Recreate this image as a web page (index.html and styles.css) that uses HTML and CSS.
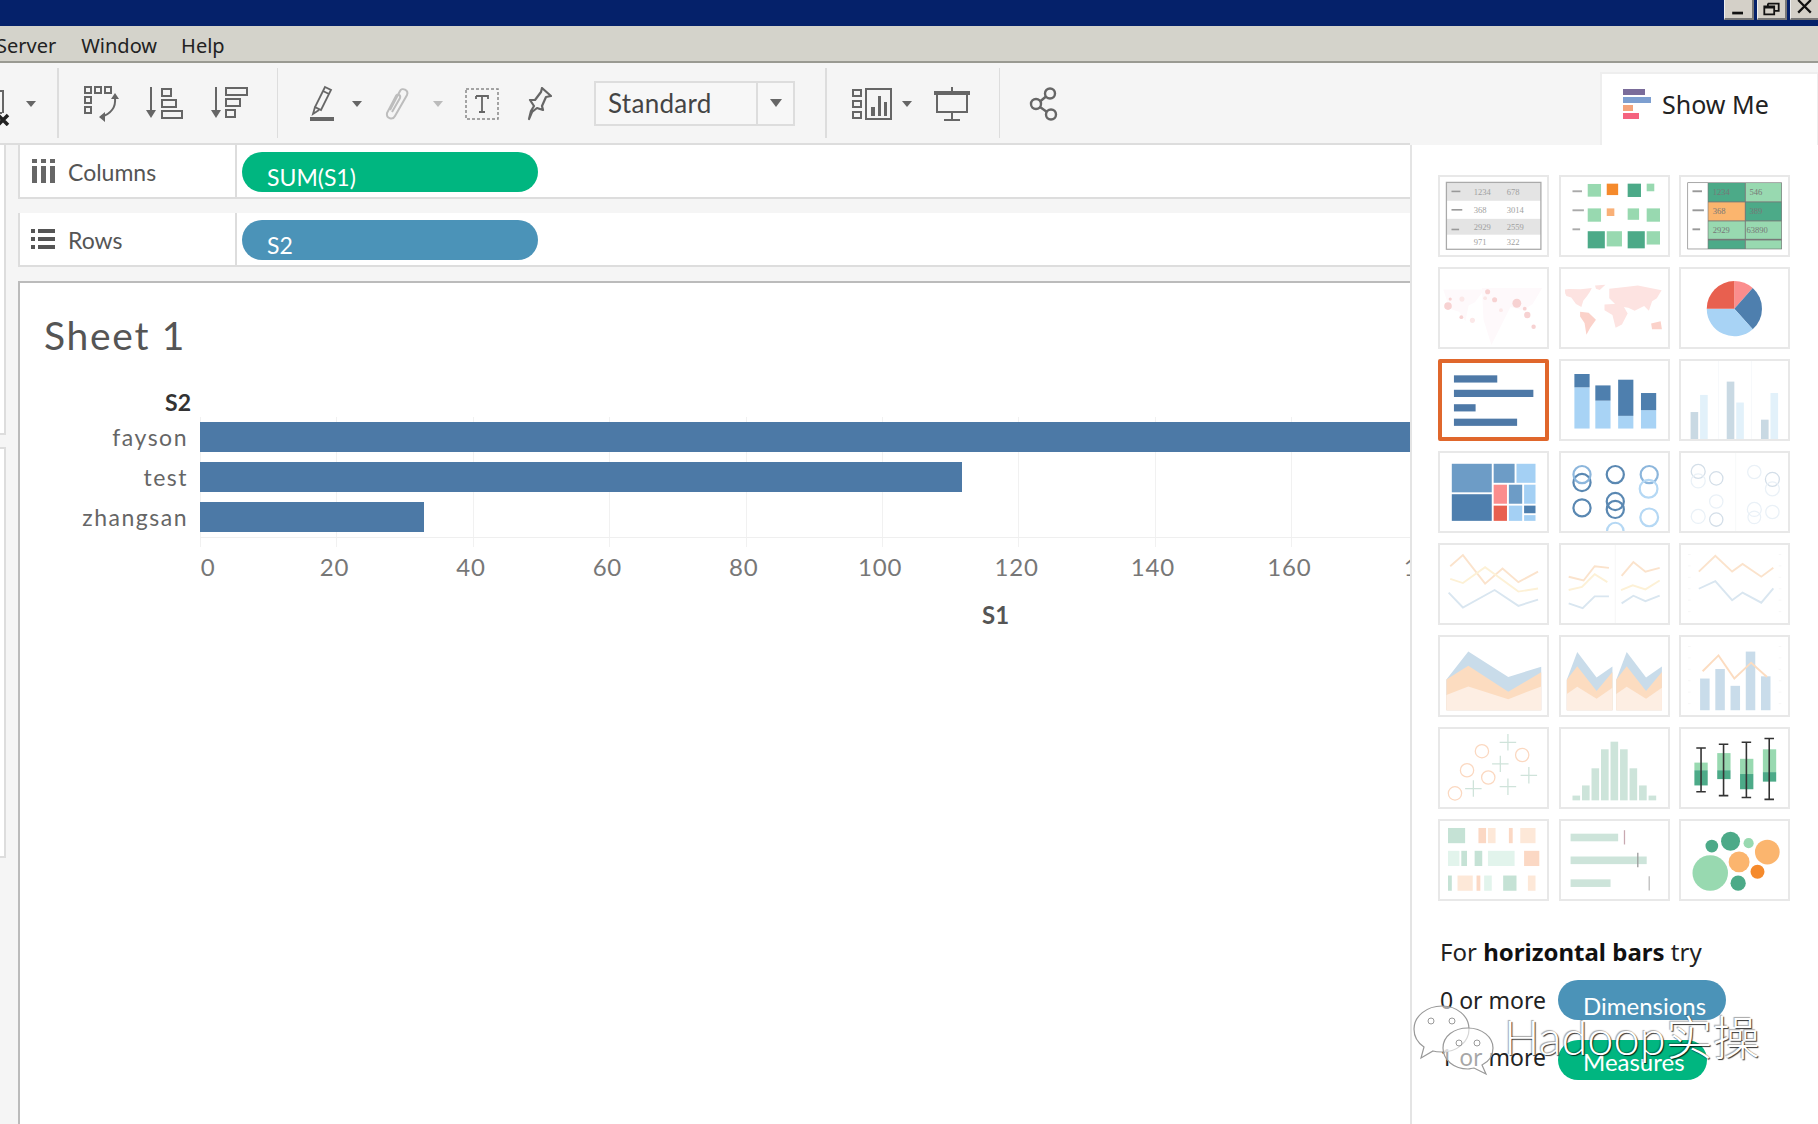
FILE: index.html
```html
<!DOCTYPE html>
<html lang="en">
<head>
<meta charset="utf-8">
<title>Tableau - Sheet 1</title>
<link rel="stylesheet" href="styles.css">
</head>
<body>
<div class="app">
  <header class="titlebar">
    <div class="winbtn"><svg class="wg" viewBox="0 0 30 20"><rect x="8" y="13" width="12" height="3" fill="#111"/></svg></div>
    <div class="winbtn"><svg class="wg" viewBox="0 0 30 20"><path d="M11 4h12v8h-4M11 4v3M7 7h11v9H7zM7 8.500h11" fill="none" stroke="#111" stroke-width="2"/></svg></div>
    <div class="winbtn close"><svg class="wg" viewBox="0 0 28 20"><path d="M7 0l14 14M21 0L7 14" stroke="#111" stroke-width="2.500"/></svg></div>
  </header>
  <nav class="menubar"><span class="m-server">Server</span><span>Window</span><span>Help</span></nav>

  <div class="workspace">
    <div class="leftcol">
      <div class="toolbar">
        <svg class="ti i-clear" viewBox="0 0 10 36"><path d="M-4 1h7v22M-4 23h6" fill="none" stroke="#666" stroke-width="2"/><path d="M-2 25l10 10M8 25L-2 35" stroke="#222" stroke-width="3.500"/></svg>
        <i class="caret c-clear"></i>
        <b class="sep s1"></b>
        <svg class="ti i-swap" viewBox="0 0 36 36"><g fill="none" stroke="#666" stroke-width="2"><rect x="1" y="1" width="6" height="6"/><rect x="11" y="1" width="6" height="6"/><rect x="21" y="1" width="6" height="6"/><rect x="1" y="11" width="6" height="6"/><rect x="1" y="21" width="6" height="6"/><path d="M31 12c1 9-4 16-14 19"/></g><path d="M27 13l4-6 4 6zM21 26l-6 5 6 5z" fill="#666"/></svg>
        <svg class="ti i-asc" viewBox="0 0 38 36"><path d="M5 1v26" stroke="#666" stroke-width="2"/><path d="M0 24h10l-5 8z" fill="#666"/><g fill="none" stroke="#666" stroke-width="2"><rect x="16" y="3" width="9" height="7"/><rect x="16" y="14" width="14" height="7"/><rect x="16" y="25" width="20" height="7"/></g></svg>
        <svg class="ti i-desc" viewBox="0 0 38 36"><path d="M5 1v26" stroke="#666" stroke-width="2"/><path d="M0 24h10l-5 8z" fill="#666"/><g fill="none" stroke="#666" stroke-width="2"><rect x="15" y="2" width="21" height="7"/><rect x="15" y="13" width="14" height="7"/><rect x="15" y="24" width="9" height="7"/></g></svg>
        <b class="sep s2"></b>
        <svg class="ti i-pen" viewBox="0 0 26 38"><path d="M15 2l6 3-10 20-6-3zM5 22l-2 7 6-4M13 6l6 3" fill="none" stroke="#666" stroke-width="1.800"/><rect x="0" y="32" width="24" height="4" fill="#666"/></svg>
        <i class="caret c-pen"></i>
        <svg class="ti i-clip" viewBox="0 0 26 36"><path d="M6 24L16 5c2-4 9-1 7 4L11 30c-2 4-9 3-8-3L12 10c1-3 5-1 4 2L8 26" fill="none" stroke="#bdbdbd" stroke-width="2"/></svg>
        <i class="caret c-clip"></i>
        <svg class="ti i-text" viewBox="0 0 34 32"><rect x="1" y="1" width="32" height="30" fill="none" stroke="#888" stroke-width="1.500" stroke-dasharray="3 2"/><path d="M11 8h12v3M11 8v3M17 8v16M14 24h6" fill="none" stroke="#666" stroke-width="1.800"/></svg>
        <svg class="ti i-pin" viewBox="0 0 26 34"><path d="M16 1l9 8-5 1-4 9 1 4-6-2-5 4-3 7 2-8 3-5-4-6 5 0 6-8z" fill="none" stroke="#666" stroke-width="2.200" stroke-linejoin="round"/></svg>
        <div class="select"><span class="select-text">Standard</span><span class="select-arrow"><i class="caret big"></i></span></div>
        <b class="sep s3"></b>
        <svg class="ti i-showme" viewBox="0 0 40 32"><g fill="none" stroke="#666" stroke-width="2"><rect x="1" y="2" width="8" height="6"/><rect x="1" y="13" width="8" height="6"/><rect x="1" y="24" width="8" height="6"/><rect x="14" y="1" width="25" height="30"/></g><path d="M19 19h4v9h-4zM26 8h3v20h-3zM32 14h3v14h-3z" fill="#666"/></svg>
        <i class="caret c-showme"></i>
        <svg class="ti i-present" viewBox="0 0 36 34"><path d="M0 4h36v4H0zM17 0h2v4h-2z" fill="#666"/><path d="M3 8v17h30V8M18 25v8M10 33h16" fill="none" stroke="#666" stroke-width="2"/></svg>
        <b class="sep s4"></b>
        <svg class="ti i-share" viewBox="0 0 30 34"><g fill="none" stroke="#666" stroke-width="2.400"><circle cx="21" cy="6.500" r="5"/><circle cx="7" cy="17" r="5"/><circle cx="22" cy="27.500" r="5"/><path d="M17 9.500l-6 5M11 20l7 5"/></g></svg>
      </div>

      <div class="below">
        <aside class="side"><div class="side-a"></div><div class="side-b"></div></aside>
        <main class="center">
          <div class="shelf">
            <div class="shelf-label">
              <svg class="shelf-ic" viewBox="0 0 24 24"><path d="M1 0h5v4H1zM10 0h5v4h-5zM19 0h5v4h-5zM1 7h5v17H1zM10 7h5v17h-5zM19 7h5v17h-5z" fill="#666"/></svg>
              <span>Columns</span>
            </div>
            <div class="shelf-body"><div class="pill green">SUM(S1)</div></div>
          </div>
          <div class="shelf">
            <div class="shelf-label">
              <svg class="shelf-ic" viewBox="0 0 24 24"><path d="M0 2h4v4H0zM7 2h17v4H7zM0 10h4v4H0zM7 10h17v4H7zM0 18h4v4H0zM7 18h17v4H7z" fill="#555"/></svg>
              <span>Rows</span>
            </div>
            <div class="shelf-body"><div class="pill blue">S2</div></div>
          </div>
          <section class="viz">
            <h1 class="sheet-title">Sheet 1</h1>
            <div class="dim-head">S2</div>
            <div class="chart-body">
              <div class="row-labels"><div>fayson</div><div>test</div><div>zhangsan</div></div>
              <div class="plot">
                <div class="bar" style="width:1211px"></div>
                <div class="bar" style="width:762px"></div>
                <div class="bar" style="width:224px"></div>
              </div>
            </div>
            <div class="axis">
              <span class="first">0</span><span>20</span><span>40</span><span>60</span><span>80</span><span>100</span><span>120</span><span>140</span><span>160</span><span>180</span>
            </div>
            <div class="axis-title">S1</div>
          </section>
        </main>
      </div>
    </div>

    <div class="rightcol">
      <div class="rtop">
        <div class="tab">
          <svg class="tab-ic" viewBox="0 0 28 30"><rect width="22" height="6" fill="#7a6c9a"/><rect y="8" width="28" height="6" fill="#7d9fd0"/><rect y="16" width="10" height="6" fill="#f4a47c"/><rect y="24" width="16" height="6" fill="#f5637f"/></svg>
          <span>Show Me</span>
        </div>
      </div>
      <div class="showme">
        <div class="thumbs">
          <svg class="th" viewBox="0 0 333 246"><rect x="18" y="17" width="298" height="58" fill="#e4e4e4"/><rect x="18" y="132" width="298" height="50" fill="#e4e4e4"/><rect x="18" y="17" width="298" height="211" fill="none" stroke="#aaa" stroke-width="4"/><g fill="#999"><rect x="34" y="43" width="28" height="5"/><rect x="34" y="101" width="34" height="5"/><rect x="34" y="163" width="24" height="5"/></g><g class="tnum"><text x="104" y="58">1234</text><text x="208" y="58">678</text><text x="104" y="113">368</text><text x="208" y="113">3014</text><text x="104" y="167">2929</text><text x="208" y="167">2559</text><text x="104" y="214">971</text><text x="208" y="214">322</text></g></svg>
          <svg class="th" viewBox="0 0 333 246"><g fill="#aaa"><rect x="34" y="42" width="30" height="6"/><rect x="34" y="102" width="36" height="6"/><rect x="34" y="162" width="24" height="6"/></g><g fill="#98d9b0"><rect x="82" y="22" width="42" height="40"/><rect x="268" y="21" width="24" height="24"/><rect x="82" y="99" width="42" height="42"/><rect x="208" y="99" width="36" height="36"/><rect x="268" y="99" width="42" height="42"/><rect x="142" y="171" width="48" height="48"/><rect x="268" y="171" width="42" height="42"/></g><rect x="142" y="21" width="36" height="36" fill="#f58a2c"/><rect x="142" y="99" width="24" height="24" fill="#f9b077"/><g fill="#4caa88"><rect x="208" y="21" width="42" height="42"/><rect x="82" y="171" width="54" height="54"/><rect x="208" y="171" width="54" height="54"/></g></svg>
          <svg class="th" viewBox="0 0 333 246"><rect x="18" y="17" width="298" height="211" fill="#777"/><rect x="20" y="19" width="62" height="207" fill="#fff"/><g fill="#999"><rect x="34" y="42" width="30" height="6"/><rect x="34" y="102" width="36" height="6"/><rect x="34" y="162" width="24" height="6"/></g><rect x="84" y="19" width="115" height="58" fill="#4caa88"/><rect x="202" y="19" width="112" height="58" fill="#98d9b0"/><rect x="84" y="80" width="115" height="57" fill="#fbb56e"/><rect x="202" y="80" width="112" height="57" fill="#4caa88"/><rect x="84" y="140" width="115" height="55" fill="#98d9b0"/><rect x="202" y="140" width="112" height="55" fill="#98d9b0"/><rect x="84" y="200" width="115" height="26" fill="#4caa88"/><rect x="202" y="200" width="112" height="26" fill="#98d9b0"/><g class="tnum dark"><text x="98" y="56">1234</text><text x="214" y="56">546</text><text x="98" y="118">368</text><text x="214" y="118">389</text><text x="98" y="178">2929</text><text x="204" y="178">63890</text></g></svg>

          <svg class="th" viewBox="0 0 333 246"><path d="M8 65h130l-30 40-20 10-10 50-20-30-30-10zM130 60h190l-30 50-30 20-40-10-30 60-30 60-25-80z" fill="#fef9fb"/><g fill="#f7d2d2"><circle cx="23" cy="117" r="12"/><circle cx="148" cy="72" r="8"/><circle cx="170" cy="97" r="8"/><circle cx="240" cy="108" r="14"/><circle cx="265" cy="125" r="6"/><circle cx="273" cy="145" r="10"/><circle cx="293" cy="182" r="7"/><circle cx="65" cy="152" r="6"/><circle cx="30" cy="95" r="5"/></g><g fill="#fbe8e8"><circle cx="67" cy="95" r="8"/><circle cx="100" cy="162" r="8"/><circle cx="190" cy="130" r="6"/><circle cx="140" cy="92" r="6"/></g></svg>
          <svg class="th" viewBox="0 0 333 246"><g fill="#fde3e1"><path d="M10 65l12-2 38 1 35-4-6 12-9 13-12 15-6 20-17-10-15-20-15-5-4-8z"/><path d="M105 52l33-2-18 16-12-4z"/><path d="M150 62l50-5 40-5 75 15-15 25-15 10-10 30-15-15-30 15-20-10-35-5-25-25z"/><path d="M135 112l55-3 18 31-18 35-20 10-10-40-25-15z"/></g><g fill="#fbd2ca"><path d="M58 135l27 3 23 22-18 25-12 22-6-37-14-20z"/><path d="M282 172l30-7 4 25-31 0z"/></g></svg>
          <svg class="th" viewBox="0 0 333 246"><path d="M166 125V38a87 87 0 0 1 58 22z" fill="#fb8d8d"/><path d="M166 125l58-65a87 87 0 0 1 0 130z" fill="#4e7fae"/><path d="M166 125l58 65A87 87 0 0 1 79 125z" fill="#a8d3f5"/><path d="M166 125H79a87 87 0 0 1 87-87z" fill="#e8604f"/></svg>

          <svg class="th sel" viewBox="0 0 333 246"><g fill="#4e79a7"><rect x="35" y="41" width="144" height="24"/><rect x="35" y="89" width="264" height="24"/><rect x="35" y="137" width="72" height="24"/><rect x="35" y="185" width="210" height="24"/></g></svg>
          <svg class="th" viewBox="0 0 333 246"><g fill="#a8d3f5"><rect x="40" y="83" width="48" height="130"/><rect x="106" y="125" width="48" height="88"/><rect x="178" y="173" width="48" height="40"/><rect x="250" y="155" width="48" height="58"/></g><g fill="#4e7fae"><rect x="40" y="41" width="48" height="42"/><rect x="106" y="77" width="48" height="48"/><rect x="178" y="59" width="48" height="114"/><rect x="250" y="101" width="48" height="54"/></g></svg>
          <svg class="th" viewBox="0 0 333 246"><path d="M116 0v246M220 0v246" stroke="#f2f6f8" stroke-width="2"/><g fill="#c9d9e3"><rect x="28" y="161" width="24" height="85"/><rect x="142" y="65" width="24" height="181"/><rect x="250" y="185" width="24" height="61"/></g><g fill="#e2f1fa"><rect x="58" y="107" width="24" height="139"/><rect x="172" y="131" width="24" height="115"/><rect x="280" y="101" width="24" height="145"/></g></svg>

          <svg class="th" viewBox="0 0 333 246"><rect x="35" y="34" width="126" height="90" fill="#6d9cc6"/><rect x="35" y="130" width="126" height="84" fill="#4e7fae"/><rect x="167" y="34" width="66" height="60" fill="#6d9cc6"/><rect x="239" y="34" width="60" height="60" fill="#a4d0f4"/><rect x="167" y="100" width="42" height="60" fill="#fb8d8d"/><rect x="215" y="100" width="42" height="60" fill="#6d9cc6"/><rect x="263" y="100" width="36" height="60" fill="#a4d0f4"/><rect x="167" y="166" width="42" height="48" fill="#e8604f"/><rect x="215" y="166" width="42" height="48" fill="#a4d0f4"/><rect x="263" y="166" width="36" height="24" fill="#4e7fae"/><rect x="263" y="196" width="36" height="18" fill="#a4d0f4"/></svg>
          <svg class="th" viewBox="0 0 333 246"><g fill="none" stroke-width="7"><g stroke="#5a88b2"><circle cx="64" cy="93" r="27"/><circle cx="169" cy="68" r="27"/><circle cx="64" cy="173" r="27"/><circle cx="169" cy="153" r="27"/><circle cx="169" cy="178" r="27"/></g><g stroke="#8cb6dc"><circle cx="64" cy="68" r="27"/><circle cx="276" cy="68" r="27"/></g><g stroke="#b5d8f4"><circle cx="274" cy="113" r="28"/><circle cx="276" cy="203" r="28"/><circle cx="169" cy="246" r="26"/></g></g></svg>
          <svg class="th" viewBox="0 0 333 246"><path d="M170 0v246" stroke="#f3f5f7" stroke-width="2"/><g fill="none" stroke-width="4"><g stroke="#d3dee8"><circle cx="52" cy="58" r="22"/><circle cx="109" cy="80" r="21"/><circle cx="109" cy="210" r="21"/><circle cx="286" cy="83" r="22"/></g><g stroke="#eaf1f7"><circle cx="52" cy="88" r="22"/><circle cx="109" cy="153" r="21"/><circle cx="52" cy="200" r="22"/><circle cx="229" cy="60" r="21"/><circle cx="286" cy="113" r="22"/><circle cx="229" cy="178" r="22"/><circle cx="229" cy="203" r="20"/><circle cx="286" cy="186" r="21"/></g></g></svg>

          <svg class="th" viewBox="0 0 333 246"><g fill="none" stroke-width="6"><path d="M30 67l40-35 70 90 55-48 50 43 62-33" stroke="#fbe3cc"/><path d="M30 107l40 13 70-50 105 77 62-10" stroke="#fdf1d6"/><path d="M25 150l45 47 100-55 75 50 62-20" stroke="#d9e6f0"/></g></svg>
          <svg class="th" viewBox="0 0 333 246"><path d="M169 0v246" stroke="#f0f0f0" stroke-width="2"/><g fill="none" stroke-width="6"><g stroke="#fbe3cc"><path d="M22 100l47 12 35-45 45 5"/><path d="M189 97l37-43 38 30 45-12"/></g><g stroke="#fdf1d6"><path d="M22 142l42-10 40-40 40 25"/><path d="M187 142l37-15 40 13 45-28"/></g><g stroke="#d9e6f0"><path d="M22 184l44 15 38-37h45"/><path d="M189 184l37-24 38 17 45-17"/></g></g></svg>
          <svg class="th" viewBox="0 0 333 246"><path d="M20 30h8M20 66h8M20 102h8M20 138h8M20 174h8M20 210h8M306 30h8M306 66h8M306 102h8M306 138h8M306 174h8M306 210h8" stroke="#f2f2f2" stroke-width="2"/><g fill="none" stroke-width="6"><path d="M54 84l52-50 53 50 33-24 59 40 38-28" stroke="#fbe3cc"/><path d="M54 138l52-24 53 60 33-24 59 32 38-45" stroke="#d9e6f0"/></g></svg>

          <svg class="th" viewBox="0 0 333 246"><path d="M18 134l69-88 126 80 104-32v137H18z" fill="#c9dcea"/><path d="M18 134l69-43 126 82 104-62v120H18z" fill="#fcdcc0"/><path d="M18 183l69-27 126 40 104-40v75H18z" fill="#fdeee3"/></svg>
          <svg class="th" viewBox="0 0 333 246"><path d="M16 135l33-88 61 81 50-35v138H16z" fill="#c9dcea"/><path d="M16 135l33-43 61 78 50-60v121H16z" fill="#fcdcc0"/><path d="M16 180l33-23 61 38 50-35v71H16z" fill="#fdeee3"/><path d="M172 135l33-88 61 81 50-35v138H172z" fill="#c9dcea"/><path d="M172 135l33-43 61 78 50-60v121H172z" fill="#fcdcc0"/><path d="M172 180l33-23 61 38 50-35v71H172z" fill="#fdeee3"/></svg>
          <svg class="th" viewBox="0 0 333 246"><path d="M20 30h8M20 66h8M20 102h8M20 138h8M20 174h8M20 210h8M306 30h8M306 66h8M306 102h8M306 138h8M306 174h8M306 210h8" stroke="#f2f2f2" stroke-width="2"/><g fill="#c9dcea"><rect x="58" y="131" width="30" height="100"/><rect x="106" y="101" width="30" height="130"/><rect x="154" y="154" width="30" height="77"/><rect x="202" y="46" width="30" height="185"/><rect x="250" y="124" width="30" height="107"/></g><path d="M66 108l50-50 50 73 53-50 50 45" fill="none" stroke="#fcdcc0" stroke-width="6"/></svg>

          <svg class="th" viewBox="0 0 333 246"><g fill="none" stroke="#fbd8c0" stroke-width="4"><circle cx="130" cy="70" r="21"/><circle cx="83" cy="130" r="21"/><circle cx="150" cy="153" r="21"/><circle cx="257" cy="82" r="21"/><circle cx="45" cy="203" r="21"/></g><path d="M212 16v52M186 42h52M188 84v52M162 110h52M278 120v52M252 146h52M103 162v52M77 188h52M212 156v52M186 182h52" stroke="#cfe3da" stroke-width="4"/></svg>
          <svg class="th" viewBox="0 0 333 246"><g fill="#cde4da"><rect x="34" y="210" width="24" height="15"/><rect x="64" y="178" width="24" height="47"/><rect x="94" y="124" width="24" height="101"/><rect x="124" y="64" width="24" height="161"/><rect x="154" y="40" width="24" height="185"/><rect x="184" y="64" width="24" height="161"/><rect x="214" y="124" width="24" height="101"/><rect x="244" y="178" width="24" height="47"/><rect x="274" y="210" width="24" height="15"/></g></svg>
          <svg class="th" viewBox="0 0 333 246"><g fill="#98d9b0"><rect x="40" y="106" width="42" height="24"/><rect x="112" y="76" width="42" height="54"/><rect x="184" y="94" width="42" height="48"/><rect x="256" y="64" width="42" height="72"/></g><g fill="#4caa88"><rect x="40" y="130" width="42" height="48"/><rect x="112" y="130" width="42" height="28"/><rect x="184" y="142" width="42" height="48"/><rect x="256" y="136" width="42" height="30"/></g><path d="M61 60v138M46 60h30M46 198h30M132 48v162M117 48h30M117 210h30M204 42v174M189 42h30M189 216h30M276 30v192M261 30h30M261 222h30" fill="none" stroke="#333" stroke-width="5"/></svg>

          <svg class="th" viewBox="0 0 333 246"><g fill="#c5e2d5"><rect x="23" y="22" width="54" height="48"/><rect x="65" y="94" width="18" height="48"/><rect x="107" y="94" width="24" height="48"/><rect x="23" y="172" width="12" height="48"/><rect x="197" y="172" width="42" height="48"/></g><g fill="#fbd8c4"><rect x="119" y="22" width="24" height="48"/><rect x="215" y="22" width="12" height="48"/><rect x="263" y="94" width="48" height="48"/><rect x="113" y="172" width="12" height="48"/></g><g fill="#fde8d8"><rect x="149" y="22" width="24" height="48"/><rect x="251" y="22" width="48" height="48"/><rect x="53" y="172" width="48" height="48"/><rect x="275" y="172" width="24" height="48"/></g><g fill="#e2f4ec"><rect x="23" y="94" width="36" height="48"/><rect x="149" y="94" width="84" height="48"/><rect x="137" y="172" width="24" height="48"/></g></svg>
          <svg class="th" viewBox="0 0 333 246"><g fill="#cde4da"><rect x="28" y="40" width="150" height="24"/><rect x="28" y="112" width="240" height="24"/><rect x="28" y="184" width="126" height="24"/></g><path d="M198 29v45" stroke="#c8a8b0" stroke-width="4"/><path d="M240 100v46" stroke="#999" stroke-width="4"/><path d="M276 174v45" stroke="#bbb" stroke-width="4"/></svg>
          <svg class="th" viewBox="0 0 333 246"><circle cx="90" cy="164" r="56" fill="#98d9b0"/><circle cx="154" cy="64" r="30" fill="#4caa88"/><circle cx="95" cy="79" r="20" fill="#4caa88"/><circle cx="211" cy="70" r="16" fill="#98d9b0"/><circle cx="270" cy="98" r="39" fill="#fbb56e"/><circle cx="181" cy="129" r="33" fill="#fbb56e"/><circle cx="239" cy="160" r="22" fill="#f58a2c"/><circle cx="178" cy="196" r="24" fill="#4caa88"/></svg>
        </div>

        <p class="hint">For <strong>horizontal bars</strong> try</p>
        <div class="need"><span>0 or more</span><span class="tag blue">Dimensions</span></div>
        <div class="need"><span class="raised">1 or more</span><span class="tag green">Measures</span></div>
      </div>
    </div>
  </div>

  <div class="watermark">
    <svg class="wm-ic" viewBox="0 0 90 75"><g fill="rgba(255,255,255,.6)" stroke="#999" stroke-width="1.200"><path d="M32 3c15 0 27 10 27 23 0 13-12 23-27 23-3 0-6 0-9-1L11 55l3-11C8 40 4 33 4 26 4 13 17 3 32 3z"/><path d="M58 25c14 0 25 9 25 20 0 8-5 14-11 17l4 9-12-6c-2 0-4 1-6 1-14 0-25-9-25-21s11-20 25-20z"/></g><g fill="none" stroke="#999" stroke-width="1"><circle cx="21" cy="18" r="3"/><circle cx="42" cy="18" r="3"/><circle cx="49" cy="40" r="3"/><circle cx="67" cy="40" r="3"/></g></svg>
    <span class="wm-text">Hadoop实操</span>
  </div>
</div>
</body>
</html>
```
FILE: styles.css
```css
* { box-sizing: border-box; }
html, body { margin: 0; padding: 0; background: #fff; }
body { font-family: "Lato", "Noto Sans", sans-serif; color: #333; overflow: hidden; }
.app { position: relative; width: 1818px; height: 1124px; overflow: hidden; display: flex; flex-direction: column; }

.titlebar { height: 26px; background: #05216a; display: flex; justify-content: flex-end; align-items: flex-start; gap: 3px; flex: none; }
.winbtn { width: 30px; height: 20px; background: #d4d0c8; border-right: 2px solid #777; border-bottom: 2px solid #777; border-left: 1px solid #eee; }
.winbtn.close { width: 28px; border-right: 0; }
.wg { display: block; width: 100%; height: 100%; }

.menubar { height: 37px; flex: none; background: #d4d3cb; border-bottom: 2px solid #9a9a92; display: flex; align-items: center; gap: 24px; font-family: "Noto Sans", sans-serif; font-size: 20px; color: #222; padding: 3px 0 0; overflow: hidden; }
.m-server { margin-left: -4px; margin-right: 1px; }

.workspace { flex: 1; display: flex; min-height: 0; }
.leftcol { width: 1410px; flex: none; display: flex; flex-direction: column; }
.rightcol { flex: 1; display: flex; flex-direction: column; min-width: 0; }

.toolbar { height: 82px; flex: none; background: #f5f5f5; border-bottom: 2px solid #ddd; display: flex; align-items: center; padding-top: 2px; }
.ti { display: block; flex: none; }
.sep { display: block; width: 1.500px; height: 70px; background: #ddd; flex: none; margin-top: -2px; }
.caret { display: block; flex: none; width: 0; height: 0; border-left: 5px solid transparent; border-right: 5px solid transparent; border-top: 6px solid #666; }
.caret.big { border-left-width: 6px; border-right-width: 6px; border-top-width: 8px; }

.i-clear { width: 10px; height: 36px; margin-top: 8px; }
.c-clear { margin-left: 16px; }
.s1 { margin-left: 21px; }
.i-swap { width: 36px; height: 36px; margin-left: 25px; }
.i-asc { width: 38px; height: 36px; margin-left: 26px; }
.i-desc { width: 38px; height: 36px; margin-left: 27px; }
.s2 { margin-left: 28px; }
.i-pen { width: 26px; height: 38px; margin-left: 32px; }
.c-pen { margin-left: 16px; }
.i-clip { width: 26px; height: 36px; margin-left: 22px; }
.c-clip { margin-left: 23px; border-top-color: #bbb; }
.i-text { width: 34px; height: 32px; margin-left: 22px; }
.i-pin { width: 26px; height: 34px; margin-left: 27px; }
.select { width: 201px; height: 45px; margin-left: 42px; flex: none; background: #f7f7f7; border: 2px solid #ddd; display: flex; align-items: center; margin-top: -2px; }
.select-text { flex: 1; padding-left: 12px; font-size: 26px; color: #444; letter-spacing: .3px; }
.select-arrow { width: 37px; height: 100%; border-left: 2px solid #ddd; display: flex; align-items: center; justify-content: center; }
.s3 { margin-left: 30px; }
.i-showme { width: 40px; height: 32px; margin-left: 25px; }
.c-showme { margin-left: 10px; }
.i-present { width: 36px; height: 34px; margin-left: 22px; }
.s4 { margin-left: 29px; }
.i-share { width: 30px; height: 34px; margin-left: 29px; }

.below { flex: 1; display: flex; min-height: 0; background: #f5f5f5; }
.side { width: 18px; flex: none; }
.side-a { width: 6px; height: 290px; background: #fff; border-right: 2px solid #ddd; border-bottom: 2px solid #ddd; }
.side-b { width: 6px; height: 411px; margin-top: 12px; background: #fff; border-right: 2px solid #ddd; border-bottom: 2px solid #ddd; border-top: 2px solid #ddd; }
.center { flex: 1; min-width: 0; display: flex; flex-direction: column; gap: 14px; }

.shelf { height: 54px; flex: none; background: #fff; border: 2px solid #ddd; border-right: 0; border-top: 0; display: flex; }
.shelf-label { width: 217px; flex: none; border-right: 2px solid #ddd; display: flex; align-items: center; gap: 13px; padding: 1px 0 0 11px; font-size: 23px; color: #555; }
.shelf-ic { width: 24px; height: 24px; flex: none; margin-top: -1px; }
.shelf-body { flex: 1; padding: 7px 0 0 5px; }
.pill { width: 296px; height: 40px; border-radius: 20px; color: #fff; font-size: 23px; padding: 9px 0 0 25px; line-height: 32px; }
.green { background: #00b680; }
.blue { background: #4b93b8; }

.viz { flex: 1; min-height: 0; background: #fff; border-top: 2px solid #bbb; border-left: 2px solid #bbb; margin-top: 0; display: flex; flex-direction: column; overflow: hidden; }
.sheet-title { margin: 27px 0 0 24px; font-size: 39px; font-weight: 400; line-height: 50px; color: #555; letter-spacing: 1.7px; }
.dim-head { width: 171px; margin-top: 28px; text-align: right; font-size: 23px; font-weight: 700; line-height: 28px; color: #333; }
.chart-body { display: flex; margin-top: 1px; }
.row-labels { width: 180px; flex: none; padding-top: 0; padding-right: 12px; text-align: right; font-size: 23px; color: #666; letter-spacing: 1.500px; }
.row-labels div { height: 40px; line-height: 40px; }
.plot { flex: 1; height: 130px; padding-top: 5px; display: flex; flex-direction: column; gap: 10px; background-image: linear-gradient(#efefef, #efefef), repeating-linear-gradient(to right, #f1f1f1 0 1px, transparent 1px 136.400px); background-size: 100% 1px, 100% 100%; background-position: 0 120px, 0 0; background-repeat: no-repeat; }
.bar { height: 30px; flex: none; background: #4c79a6; }
.axis { display: flex; margin-top: 4px; margin-left: 110px; line-height: 32px; font-size: 24px; letter-spacing: .8px; color: #777; }
.axis span { width: 136.400px; flex: none; text-align: center; }
.axis .first { padding-left: 20px; }
.axis-title { margin: 17px 0 0 962px; font-size: 24px; font-weight: 700; color: #555; line-height: 30px; }

.rtop { height: 82px; flex: none; background: #f5f5f5; display: flex; justify-content: flex-end; align-items: flex-end; border-bottom: 0; }
.tab { width: 218px; height: 73px; background: #fff; border-top: 2px solid #eee; border-left: 2px solid #eee; border-right: 1px solid #eee; display: flex; align-items: center; gap: 11px; padding: 0 0 12px 21px; font-family: "Noto Sans", sans-serif; font-size: 25px; color: #222; }
.tab-ic { width: 28px; height: 30px; flex: none; }

.showme { flex: 1; background: #fff; border-left: 2px solid #e4e4e4; padding: 30px 0 0 26px; min-height: 0; }
.thumbs { display: grid; grid-template-columns: repeat(3, 111px); gap: 10px 9.500px; }
.th { display: block; width: 111px; height: 82px; background: #fff; border: 2px solid #e8e8e8; box-sizing: border-box; }
.th.sel { border: 4px solid #e0672c; border-radius: 2px; }
.tnum text { font-family: "Liberation Serif", serif; font-size: 27px; fill: #a0a0a0; }
.tnum.dark text { fill: #777; }

.hint { margin: 35px 0 0 2px; font-size: 24px; line-height: 32px; color: #222; font-family: "Noto Sans", sans-serif; }
.hint strong { font-weight: 700; color: #111; }
.need { display: flex; align-items: center; gap: 12px; margin: 12px 0 0 2px; height: 40px; font-family: "Noto Sans", sans-serif; font-size: 23px; color: #222; }
.need + .need { margin-top: 20px; }
.raised { margin-top: -7px; }
.tag { display: block; height: 40px; border-radius: 20px; color: #fff; font-family: "Lato", sans-serif; font-size: 24px; padding: 0 20px; flex: none; overflow: hidden; }
.tag.blue { width: 168px; padding-left: 25px; line-height: 52px; }
.tag.green { width: 149px; padding-left: 25px; line-height: 44px; }

.watermark { position: absolute; left: 1410px; top: 1003px; display: flex; align-items: flex-start; }
.wm-ic { width: 90px; height: 75px; display: block; flex: none; }
.wm-text { margin: 6px 0 0 4px; font-family: "Lato", "Noto Sans CJK SC", sans-serif; font-size: 47px; font-weight: 300; line-height: 56px; color: #fff; text-shadow: 1px 1px 1px rgba(0,0,0,.8), -1px -1px 1px rgba(0,0,0,.35); white-space: nowrap; }
```
